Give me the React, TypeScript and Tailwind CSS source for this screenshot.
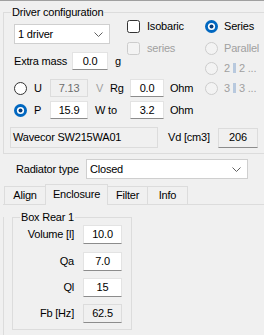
import React from "react"

const Radio = ({ checked = false, disabled = false }: { checked?: boolean; disabled?: boolean }) => (
  <svg width="13" height="13" viewBox="0 0 13 13" className="shrink-0">
    {checked ? (
      <>
        <circle cx="6.5" cy="6.5" r="6.5" fill="#0067c0" />
        <circle cx="6.5" cy="6.5" r="3.6" fill="#ffffff" />
        <circle cx="6.5" cy="6.5" r="2" fill="#0a3d7a" />
      </>
    ) : (
      <circle cx="6.5" cy="6.5" r="6" fill={disabled ? "#f3f3f3" : "#ffffff"} stroke={disabled ? "#cccccc" : "#333333"} />
    )}
  </svg>
)

const Check = ({ disabled = false }: { disabled?: boolean }) => (
  <svg width="13" height="13" viewBox="0 0 13 13" className="shrink-0">
    <rect x="0.5" y="0.5" width="12" height="12" rx="2" fill={disabled ? "#f3f3f3" : "#ffffff"} stroke={disabled ? "#cccccc" : "#333333"} />
  </svg>
)

const Chevron = () => (
  <svg width="9" height="5" viewBox="0 0 9 5" className="shrink-0">
    <path d="M0.5 0.5 L4.5 4.5 L8.5 0.5" fill="none" stroke="#606060" strokeWidth="1" />
  </svg>
)

// the double bar between the counts
const Bar = () => (
  <span className="inline-block w-[3px] h-[10px] mx-[3px] align-[-1px] bg-[#b8c9de] text-transparent overflow-hidden leading-[10px]">‖</span>
)

function Box({ value, w, h = "h-[18px]", variant = "edit" }: { value: string; w: string; h?: string; variant?: "edit" | "disabled" | "readonly" }) {
  const look =
    variant === "edit"
      ? "bg-white border border-[#e3e3e3] border-b-[#8c8c8c]"
      : variant === "disabled"
        ? "bg-[#f0f0f0] border border-[#dcdcdc] text-[#6d6d6d]"
        : "bg-[#f0f0f0] border border-[#dcdcdc] border-b-[#8c8c8c]"
  return <div className={`${w} ${h} ${look} flex items-center justify-center shrink-0`}>{value}</div>
}

function Combo({ value, w }: { value: string; w: string }) {
  return (
    <div className={`${w} h-[20px] bg-white border border-[#cfcfcf] flex items-center pl-[3px] pr-[6px] shrink-0`}>
      <span className="flex-1">{value}</span>
      <Chevron />
    </div>
  )
}

export default function App() {
  return (
    <div className="w-[264px] h-[335px] overflow-hidden bg-[#f0f0f0] border-t border-[#a0a0a0] text-[11px] leading-[13px] tracking-[-0.2px] whitespace-nowrap text-black font-['Liberation_Sans',Arial,sans-serif]">
      {/* Driver configuration */}
      <div className="relative mt-[11px] ml-[3px] w-[263px] h-[142px] border border-[#dcdcdc] pl-[6px]">
        <span className="absolute left-[7px] top-[-7px] px-[1px] bg-[#f0f0f0]">Driver configuration</span>

        <div className="flex pt-[7px]">
          <div className="ml-[4px] flex flex-col w-[191px] shrink-0">
            <div className="flex">
              <div className="mt-[4px] w-[113px]">
                <Combo value="1 driver" w="w-[96px]" />
                <div className="mt-[8px] h-[18px] flex items-center">
                  <span className="w-[58px]">Extra mass</span>
                  <Box value="0.0" w="w-[36px]" />
                  <span className="ml-[7px]">g</span>
                </div>
              </div>
              <div className="flex flex-col">
                <div className="h-[13px] flex items-center gap-[7px]">
                  <Check />
                  <span>Isobaric</span>
                </div>
                <div className="mt-[9px] h-[13px] flex items-center gap-[7px] text-[#a0a0a0]">
                  <Check disabled />
                  <span>series</span>
                </div>
              </div>
            </div>

            <div className="mt-[9px] h-[18px] flex items-center">
              <Radio />
              <span className="w-[23px] pl-[7px]">U</span>
              <Box value="7.13" w="w-[38px]" variant="disabled" />
              <span className="w-[22px] pl-[8px] text-[#a0a0a0]">V</span>
              <span className="w-[20px]">Rg</span>
              <Box value="0.0" w="w-[34px]" />
              <span className="pl-[6px]">Ohm</span>
            </div>
            <div className="mt-[4px] h-[18px] flex items-center">
              <Radio checked />
              <span className="w-[23px] pl-[7px]">P</span>
              <Box value="15.9" w="w-[38px]" />
              <span className="w-[42px] pl-[7px]">W to</span>
              <Box value="3.2" w="w-[34px]" />
              <span className="pl-[6px]">Ohm</span>
            </div>
          </div>

          <div className="flex flex-col">
            <div className="h-[13px] flex items-center gap-[6px]">
              <Radio checked />
              <span>Series</span>
            </div>
            <div className="mt-[9px] h-[13px] flex items-center gap-[6px] text-[#a0a0a0]">
              <Radio disabled />
              <span>Parallel</span>
            </div>
            <div className="mt-[7px] h-[13px] flex items-center gap-[6px] text-[#a0a0a0]">
              <Radio disabled />
              <span>
                2<Bar />2 ...
              </span>
            </div>
            <div className="mt-[7px] h-[13px] flex items-center gap-[6px] text-[#a0a0a0]">
              <Radio disabled />
              <span>
                3<Bar />3 ...
              </span>
            </div>
          </div>
        </div>

        <div className="mt-[8px] h-[21px] flex items-center">
          <div className="w-[148px] h-[21px] bg-[#f0f0f0] border border-[#dcdcdc] flex items-center pl-[2px] shrink-0">
            Wavecor SW215WA01
          </div>
          <span className="w-[60px] pl-[10px]">Vd [cm3]</span>
          <Box value="206" w="w-[40px]" h="h-[20px]" variant="readonly" />
        </div>
      </div>

      {/* Radiator type */}
      <div className="mt-[5px] h-[20px] flex items-center">
        <span className="w-[86px] pl-[16px]">Radiator type</span>
        <Combo value="Closed" w="w-[162px]" />
      </div>

      {/* Tabs */}
      <div className="mt-[5px] ml-[3px]">
        <div className="h-[21px] flex items-end pl-[1px] border-b border-[#dcdcdc]">
          <div className="w-[42px] h-[18px] border border-b-0 border-[#dcdcdc] flex items-center justify-center">Align</div>
          <div className="relative -mb-px -ml-px w-[63px] h-[21px] border border-b-0 border-[#dcdcdc] bg-[#f0f0f0] flex items-center justify-center pb-[2px]">Enclosure</div>
          <div className="-ml-px w-[41px] h-[18px] border border-b-0 border-[#dcdcdc] flex items-center justify-center">Filter</div>
          <div className="-ml-px w-[41px] h-[18px] border border-b-0 border-[#dcdcdc] flex items-center justify-center">Info</div>
        </div>
        <div className="h-[130px] border-l border-[#dcdcdc]">
          <div className="relative mt-[12px] ml-[8px] w-[120px] h-[113px] border border-[#dcdcdc]">
            <span className="absolute left-[7px] top-[-7px] px-[1px] bg-[#f0f0f0]">Box Rear 1</span>
            <div className="pt-[7px] flex flex-col">
              {[
                { label: "Volume [l]", value: "10.0", v: "edit" as const, mt: "" },
                { label: "Qa", value: "7.0", v: "edit" as const, mt: "mt-[8px]" },
                { label: "Ql", value: "15", v: "edit" as const, mt: "mt-[7px]" },
                { label: "Fb [Hz]", value: "62.5", v: "readonly" as const, mt: "mt-[7px]" },
              ].map((r) => (
                <div key={r.label} className={`${r.mt} h-[19px] flex items-center`}>
                  <span className="w-[61px] text-right">{r.label}</span>
                  <span className="w-[9px]" />
                  <Box value={r.value} w="w-[39px]" h="h-[19px]" variant={r.v} />
                </div>
              ))}
            </div>
          </div>
        </div>
      </div>
    </div>
  )
}
